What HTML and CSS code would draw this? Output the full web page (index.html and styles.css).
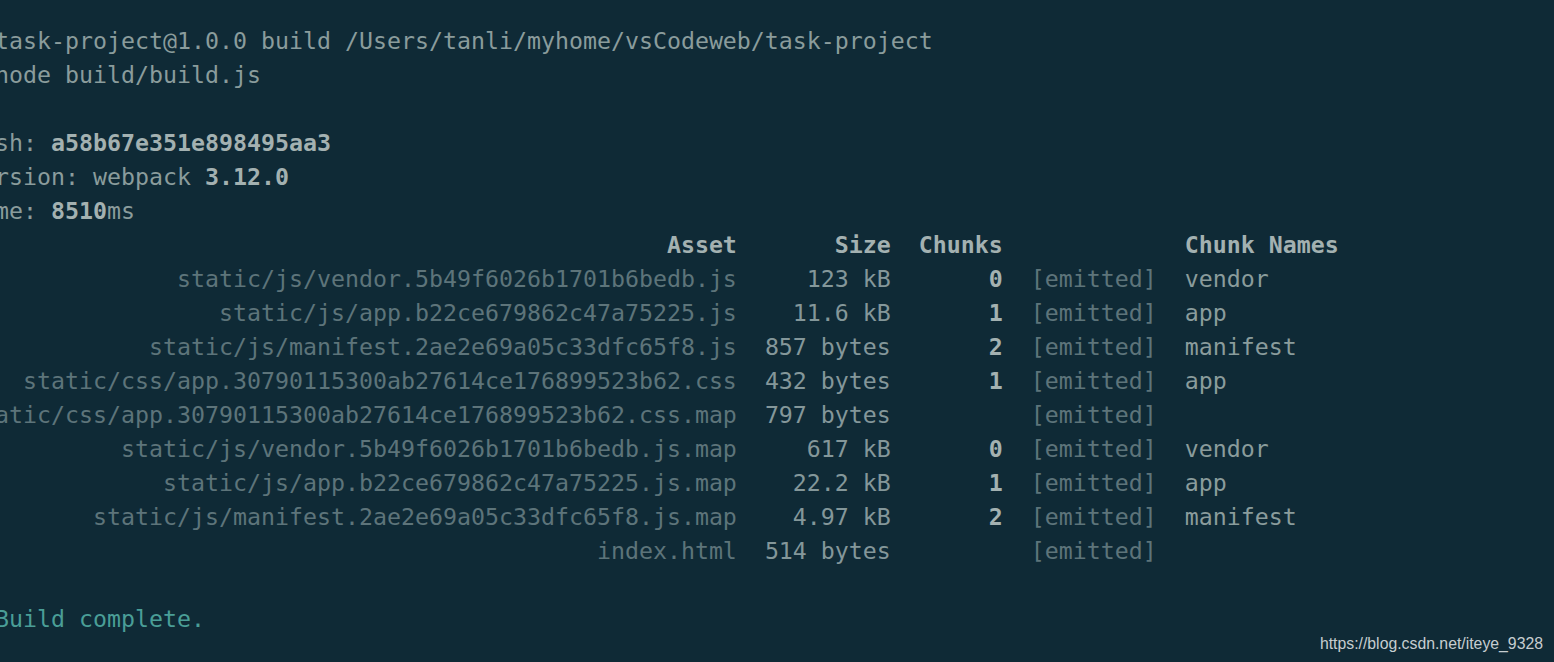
FILE: index.html
```html
<!DOCTYPE html>
<html lang="en">
<head>
    <meta charset="UTF-8">
    <meta name="viewport" content="width=device-width, initial-scale=1.0">
    <title>npm run build</title>
    <link rel="stylesheet" href="styles.css">
</head>
<body>
    <div class="terminal">
<pre class="output">&gt; task-project@1.0.0 build /Users/tanli/myhome/vsCodeweb/task-project
&gt; node build/build.js

Hash: <span class="bright">a58b67e351e898495aa3</span>
Version: webpack <span class="bright">3.12.0</span>
Time: <span class="bright">8510</span>ms
<span class="bright">                                                  Asset       Size  Chunks             Chunk Names</span>
<span class="dim">               static/js/vendor.5b49f6026b1701b6bedb.js</span>  <span class="size">   123 kB</span>  <span class="bright">     0</span>  <span class="dim">[emitted]</span>  vendor
<span class="dim">                  static/js/app.b22ce679862c47a75225.js</span>  <span class="size">  11.6 kB</span>  <span class="bright">     1</span>  <span class="dim">[emitted]</span>  app
<span class="dim">             static/js/manifest.2ae2e69a05c33dfc65f8.js</span>  <span class="size">857 bytes</span>  <span class="bright">     2</span>  <span class="dim">[emitted]</span>  manifest
<span class="dim">    static/css/app.30790115300ab27614ce176899523b62.css</span>  <span class="size">432 bytes</span>  <span class="bright">     1</span>  <span class="dim">[emitted]</span>  app
<span class="dim">static/css/app.30790115300ab27614ce176899523b62.css.map</span>  <span class="size">797 bytes</span>          <span class="dim">[emitted]</span>
<span class="dim">           static/js/vendor.5b49f6026b1701b6bedb.js.map</span>  <span class="size">   617 kB</span>  <span class="bright">     0</span>  <span class="dim">[emitted]</span>  vendor
<span class="dim">              static/js/app.b22ce679862c47a75225.js.map</span>  <span class="size">  22.2 kB</span>  <span class="bright">     1</span>  <span class="dim">[emitted]</span>  app
<span class="dim">         static/js/manifest.2ae2e69a05c33dfc65f8.js.map</span>  <span class="size">  4.97 kB</span>  <span class="bright">     2</span>  <span class="dim">[emitted]</span>  manifest
<span class="dim">                                             index.html</span>  <span class="size">514 bytes</span>          <span class="dim">[emitted]</span>

<span class="done">  Build complete.</span></pre>
    </div>
    <div class="watermark">https://blog.csdn.net/iteye_9328</div>
</body>
</html>
```

FILE: styles.css
```css
html, body {
    height: 100%;
}

body {
    margin: 0;
    background-color: #0f2a36;
    overflow: hidden;
    position: relative;
}

.terminal {
    padding-top: 24px;
}

.output {
    margin: 0 0 0 -33px;
    font-family: "DejaVu Sans Mono", "Liberation Mono", monospace;
    font-size: 23.25px;
    line-height: 34px;
    color: #8a9c9c;
    white-space: pre;
}

.bright {
    color: #a3b1b1;
    font-weight: bold;
}

.dim {
    color: #5d747a;
}

.size {
    color: #84979a;
}

.done {
    color: #4a9e97;
}

.watermark {
    position: absolute;
    right: 11px;
    bottom: 9px;
    font-family: "Liberation Sans", Arial, sans-serif;
    font-size: 15.8px;
    color: #c6cdd0;
}
```
